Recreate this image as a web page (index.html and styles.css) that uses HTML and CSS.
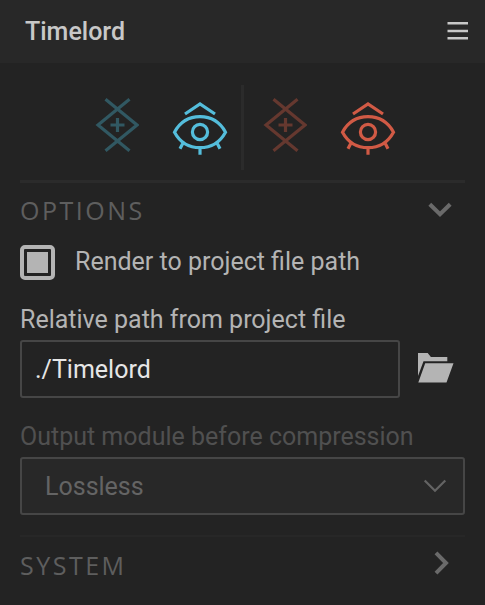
FILE: index.html
```html
<!DOCTYPE html>
<html lang="en">
<head>
<meta charset="utf-8">
<title>Timelord</title>
<link rel="stylesheet" href="styles.css">
</head>
<body>
<svg class="defs" width="0" height="0">
  <symbol id="scan" viewBox="0 0 44 56">
    <path d="M34.500 2.200 3 28 34.500 53.800M10.500 2.200 42 28 10.500 53.800M22.500 21v14M15.500 28h14"/>
  </symbol>
  <symbol id="eye" viewBox="0 0 56 56">
    <path d="M13 15 28 5 43 15M2.500 33.200C8 23.200 17 17.700 28 17.700s20 5.500 25.500 15.500C48 43.200 39 48.700 28 48.700S8 43.200 2.500 33.200zM11.500 43l-3.500 6.700M28 48.500v7.200M44.500 43l3.500 6.700"/>
    <circle cx="28" cy="33" r="7.600"/>
  </symbol>
</svg>
<main class="panel">
  <header class="header">
    <h1 class="title">Timelord</h1>
    <svg class="menu" width="22" height="20" viewBox="0 0 22 20"><path d="M.5 2.200h20.500M.5 9.900h20.500M.5 17.300h20.500"/></svg>
  </header>
  <div class="content">
    <section class="tools">
      <div class="pair blue">
        <svg class="scan" width="44" height="56"><use href="#scan"/></svg>
        <svg class="eye" width="56" height="56"><use href="#eye"/></svg>
      </div>
      <div class="pair red">
        <svg class="scan" width="44" height="56"><use href="#scan"/></svg>
        <svg class="eye" width="56" height="56"><use href="#eye"/></svg>
      </div>
    </section>
    <section class="options">
      <div class="section-head">
        <h2 class="heading">OPTIONS</h2>
        <svg class="chevron down" width="24" height="16" viewBox="0 0 24 16"><path d="m1.800 2.200 10.200 10 10.200-10"/></svg>
      </div>
      <label class="check"><span class="box"></span><span class="check-text">Render to project file path</span></label>
      <div class="label path-label"><span>Relative path from project file</span></div>
      <div class="path-row">
        <div class="field"><span class="value">./Timelord</span></div>
        <svg class="folder" width="36" height="30" viewBox="0 0 36 30"><path d="M0 0h9.700l3.200 4h16.400v4.200H5.500L0 23zM7.200 10.300H35.500L28.500 29.500H.3z"/></svg>
      </div>
      <div class="label module-label"><span>Output module before compression</span></div>
      <div class="select"><span class="select-text">Lossless</span>
        <svg class="chevron thin" width="24" height="16" viewBox="0 0 24 16"><path d="m1.700 2.500 10.300 10.300 10.300-10.300"/></svg>
      </div>
    </section>
    <section class="system">
      <h2 class="heading system-heading">SYSTEM</h2>
      <svg class="chevron right" width="16" height="24" viewBox="0 0 16 24"><path d="m2 1.800 10 10.200-10 10.200"/></svg>
    </section>
  </div>
</main>
</body>
</html>
```
FILE: styles.css
```css
* { box-sizing: border-box; }
body { margin: 0; background: #232323; font-family: Roboto, sans-serif; font-size: 25px; color: #b4b4b4; overflow: hidden; }
.defs { display: block; }
svg { display: block; fill: none; flex: none; }
h1, h2 { margin: 0; font-size: 25px; white-space: nowrap; }
.panel { height: 605px; }
.header { height: 63px; background: #282828; display: flex; justify-content: space-between; align-items: center; padding: 0 16px 0 25px; }
.title { font-weight: 500; color: #c8c8c8; line-height: 30px; }
.menu { stroke: #c8c8c8; stroke-width: 2.5; margin-bottom: 1px; }
.content { padding: 0 20px; }
.tools { height: 120px; padding-top: 22px; display: flex; border-bottom: 3px solid #2b2b2b; }
.pair { display: flex; height: 85px; }
.blue { width: 224px; padding-left: 75px; border-right: 3px solid #2b2b2b; color: #54bddb; }
.red { padding-left: 19px; color: #d15a45; }
.scan { margin-top: 12px; stroke: currentColor; stroke-width: 3.2; color: #315862; }
.red .scan { color: #65382f; }
.eye { margin: 14px 0 0 33px; stroke: currentColor; stroke-width: 3.2; }
.red .eye { margin-left: 32.5px; }
.section-head { height: 62px; display: flex; justify-content: space-between; align-items: flex-start; padding-right: 13px; }
.heading { font-family: "Open Sans", sans-serif; font-weight: 400; color: #5e5e5e; letter-spacing: 2.5px; line-height: 34px; margin-top: 10px; }
.chevron { stroke: #6a6a6a; stroke-width: 4; }
.down { margin-top: 18.5px; }
.check { display: flex; align-items: center; gap: 20px; height: 35px; white-space: nowrap; }
.check-text { padding-bottom: 2px; }
.box { width: 35px; height: 35px; flex: none; border: 4px solid #b4b4b4; border-radius: 5px; padding: 3px; background: #b4b4b4 content-box; }
.label { height: 30px; line-height: 30px; white-space: nowrap; }
.path-label { margin-top: 25px; }
.path-row { display: flex; gap: 18px; margin-top: 5px; }
.field { width: 380px; height: 58px; border: 2px solid #464646; border-radius: 3px; padding-left: 13px; line-height: 55px; color: #e6e6e6; }
.folder { fill: #b4b4b4; margin-top: 13px; }
.module-label { margin-top: 24px; color: #505050; }
.select { height: 58px; margin-top: 5px; border: 2px solid #464646; border-radius: 3px; background: #282828; display: flex; align-items: center; justify-content: space-between; padding: 0 16px 0 23px; color: #646464; }
.thin { stroke: #646464; stroke-width: 2.2; }
.system { margin-top: 20px; border-top: 2px solid #272727; display: flex; justify-content: space-between; padding-right: 15px; }
.system-heading { margin-top: 11px; }
.right { margin-top: 14px; }
```
